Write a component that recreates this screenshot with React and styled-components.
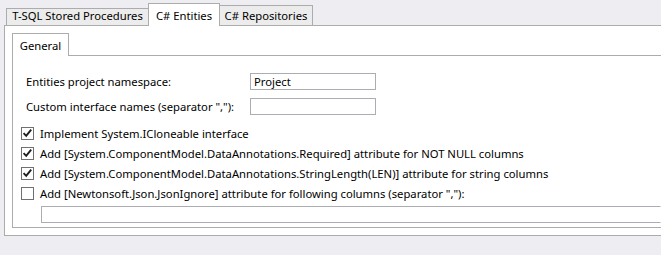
import React from "react"
import styled, { createGlobalStyle } from "styled-components"

const GlobalStyle = createGlobalStyle`
  html, body {
    margin: 0;
    padding: 0;
    background: #eeeef2;
    overflow: hidden;
  }
  body {
    font-family: "Noto Sans", "Open Sans", sans-serif;
    font-size: 11.25px;
    color: #000;
  }
`

const checks = [
  { label: "Implement System.ICloneable interface", checked: true },
  { label: "Add [System.ComponentModel.DataAnnotations.Required] attribute for NOT NULL columns", checked: true },
  { label: "Add [System.ComponentModel.DataAnnotations.StringLength(LEN)] attribute for string columns", checked: true },
  { label: 'Add [Newtonsoft.Json.JsonIgnore] attribute for following columns (separator ","):', checked: false },
]

const CheckBox = ({ checked }) => (
  <Box>
    {checked && (
      <svg width='11' height='11' viewBox='0 0 11 11'>
        <path d='M1.6 5.2 L4.2 7.9 L9.2 1.6' fill='none' stroke='#1e1e1e' strokeWidth='1.9' />
      </svg>
    )}
  </Box>
)

const App = () => {
  return (
    <Page>
      <GlobalStyle />
      <TabStrip>
        <Tab $w={143} $h={17} $first>T-SQL Stored Procedures</Tab>
        <Tab $w={72} $active>C# Entities</Tab>
        <Tab $w={94} $h={20}>C# Repositories</Tab>
      </TabStrip>
      <Panel>
        <TabStrip>
          <Tab $w={57} $active $first>General</Tab>
        </TabStrip>
        <InnerPanel>
          <Fields>
            <FieldLabel>Entities project namespace:</FieldLabel>
            <TextBox>Project</TextBox>
            <FieldLabel>Custom interface names (separator ","):</FieldLabel>
            <TextBox />
          </Fields>
          <CheckList>
            {checks.map((c) => (
              <CheckRow key={c.label}>
                <CheckBox checked={c.checked} />
                <span>{c.label}</span>
              </CheckRow>
            ))}
          </CheckList>
          <WideTextBox />
        </InnerPanel>
      </Panel>
    </Page>
  )
}

export default App

const Page = styled.div`
  padding: 3px 0 0 4px;
`

const TabStrip = styled.div`
  display: flex;
  align-items: flex-end;
  height: 22px;
`

const Tab = styled.div`
  box-sizing: border-box;
  width: ${(p) => p.$w}px;
  height: ${(p) => (p.$active ? 23 : p.$h)}px;
  margin-left: ${(p) => (p.$first ? (p.$active ? 0 : 2) : -1)}px;
  margin-bottom: ${(p) => (p.$active ? -1 : 0)}px;
  position: relative;
  z-index: ${(p) => (p.$active ? 1 : 0)};
  border: 1px solid #acacac;
  border-bottom: none;
  background: ${(p) => (p.$active ? "#fff" : "#ececec")};
  display: flex;
  justify-content: center;
  align-items: flex-end;
  padding-bottom: ${(p) => (p.$active ? 3 : 2)}px;
  line-height: 15px;
  white-space: nowrap;
`

const Panel = styled.div`
  box-sizing: border-box;
  height: 211px;
  border: 1px solid #acacac;
  border-right: none;
  background: #fff;
  padding: 7px 0 7px 7px;
`

const InnerPanel = styled.div`
  box-sizing: border-box;
  height: 173px;
  border: 1px solid #acacac;
  border-right: none;
  padding: 17px 0 0 8px;
`

const Fields = styled.div`
  display: grid;
  grid-template-columns: 229px 126px;
  row-gap: 8px;
  align-items: center;
`

const FieldLabel = styled.div`
  padding-left: 5px;
  white-space: nowrap;
`

const TextBox = styled.div`
  box-sizing: border-box;
  height: 17px;
  border: 1px solid #abadb3;
  border-right-color: ${(p) => (p.$open ? "transparent" : "#abadb3")};
  padding: 0 3px;
  line-height: 15px;
  background: #fff;
`

const CheckList = styled.div`
  margin-top: 8px;
  display: flex;
  flex-direction: column;
`

const CheckRow = styled.div`
  display: flex;
  align-items: center;
  gap: 6px;
  height: 20px;
  white-space: nowrap;
`

const Box = styled.div`
  box-sizing: border-box;
  width: 13px;
  height: 13px;
  border: 1px solid #707070;
  background: #fff;
  flex: none;
  display: flex;
`

const WideTextBox = styled(TextBox).attrs({ $open: true })`
  margin: 3px 0 0 20px;
`
